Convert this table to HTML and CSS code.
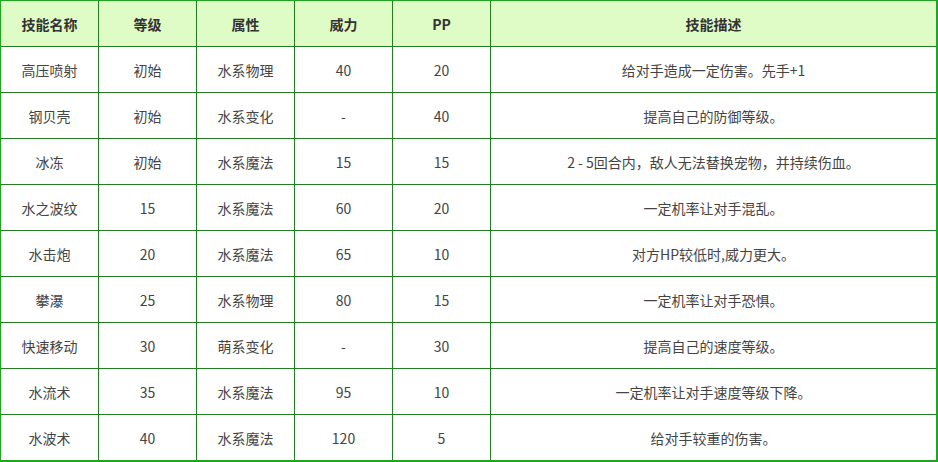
FILE: index.html
```html
<!DOCTYPE html>
<html lang="zh">
<head>
<meta charset="utf-8">
<title>技能</title>
<link rel="stylesheet" href="styles.css">
</head>
<body>
<table class="skills">
  <colgroup>
    <col class="c-n"><col class="c-n"><col class="c-n"><col class="c-n"><col class="c-n"><col class="c-d">
  </colgroup>
  <thead>
    <tr><th>技能名称</th><th>等级</th><th>属性</th><th>威力</th><th>PP</th><th>技能描述</th></tr>
  </thead>
  <tbody>
    <tr><td>高压喷射</td><td>初始</td><td>水系物理</td><td>40</td><td>20</td><td>给对手造成一定伤害。先手+1</td></tr>
    <tr><td>钢贝壳</td><td>初始</td><td>水系变化</td><td>-</td><td>40</td><td>提高自己的防御等级。</td></tr>
    <tr><td>冰冻</td><td>初始</td><td>水系魔法</td><td>15</td><td>15</td><td>2 - 5回合内，敌人无法替换宠物，并持续伤血。</td></tr>
    <tr><td>水之波纹</td><td>15</td><td>水系魔法</td><td>60</td><td>20</td><td>一定机率让对手混乱。</td></tr>
    <tr><td>水击炮</td><td>20</td><td>水系魔法</td><td>65</td><td>10</td><td>对方HP较低时,威力更大。</td></tr>
    <tr><td>攀瀑</td><td>25</td><td>水系物理</td><td>80</td><td>15</td><td>一定机率让对手恐惧。</td></tr>
    <tr><td>快速移动</td><td>30</td><td>萌系变化</td><td>-</td><td>30</td><td>提高自己的速度等级。</td></tr>
    <tr><td>水流术</td><td>35</td><td>水系魔法</td><td>95</td><td>10</td><td>一定机率让对手速度等级下降。</td></tr>
    <tr><td>水波术</td><td>40</td><td>水系魔法</td><td>120</td><td>5</td><td>给对手较重的伤害。</td></tr>
  </tbody>
</table>
</body>
</html>
```

FILE: styles.css
```css
html, body {
  margin: 0;
  padding: 0;
  background: #ffffff;
}
.skills {
  border-collapse: separate;
  border-spacing: 0;
  table-layout: fixed;
  width: 938px;
  border-top: 1px solid #22a322;
  border-left: 1px solid #22a322;
  border-right: 2px solid #22a322;
  border-bottom: 2px solid #22a322;
  font-family: "Noto Sans CJK SC", "Noto Sans", sans-serif;
  font-size: 14px;
}
.c-n { width: 98px; }
.c-d { width: 445px; }
.skills th,
.skills td {
  box-sizing: border-box;
  height: 46px;
  padding: 0;
  text-align: center;
  vertical-align: middle;
  border-right: 1px solid #247d24;
  border-bottom: 1px solid #247d24;
  line-height: 20px;
}
.skills th:last-child,
.skills td:last-child {
  border-right: none;
}
.skills tbody tr:last-child td {
  border-bottom: none;
  height: 45px;
}
.skills th {
  background: #e0fcc6;
  color: #333333;
  font-weight: bold;
}
.skills td {
  color: #444444;
  font-weight: normal;
}
```
